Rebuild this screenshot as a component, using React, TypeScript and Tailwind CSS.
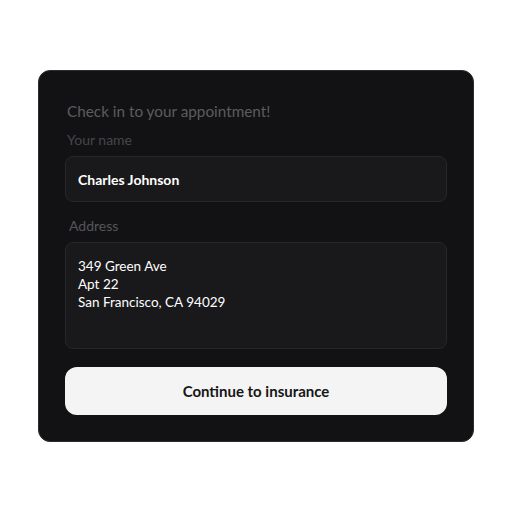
import React, { useState } from 'react';

export default function App() {
  const [name, setName] = useState('Charles Johnson');
  const [address, setAddress] = useState('349 Green Ave\nApt 22\nSan Francisco, CA 94029');

  return (
    <div className="w-[512px] h-[512px] bg-white flex items-start justify-center pt-[70px]" style={{ fontFamily: 'Lato, "Open Sans", sans-serif' }}>
      <div className="w-[436px] bg-[#121214] border border-[#2c2c2e] rounded-[12px] px-[26px] pt-[30px] pb-[26px]">
        <h1 className="text-[15.3px] leading-[20px] text-[#5c5c5e] ml-[2px]">Check in to your appointment!</h1>

        <label htmlFor="name" className="block mt-[10px] ml-[2px] text-[14px] leading-[18px] text-[#46464a]">
          Your name
        </label>
        <input
          id="name"
          value={name}
          onChange={(e) => setName(e.target.value)}
          className="mt-[7px] w-full h-[46px] bg-[#19191b] border border-[#27272a] rounded-[8px] px-[12px] text-[14px] font-bold text-white outline-none"
        />

        <label htmlFor="address" className="block mt-[15px] ml-[4px] text-[14px] leading-[18px] text-[#56565a]">
          Address
        </label>
        <textarea
          id="address"
          value={address}
          onChange={(e) => setAddress(e.target.value)}
          className="mt-[7px] block w-full h-[107px] resize-none bg-[#19191b] border border-[#27272a] rounded-[8px] px-[12px] pt-[14px] text-[13.5px] leading-[18px] text-white outline-none"
        />

        <button className="mt-[18px] w-full h-[48px] bg-[#f4f4f4] rounded-[12px] text-[15px] font-bold text-[#161616]">
          Continue to insurance
        </button>
      </div>
    </div>
  );
}
